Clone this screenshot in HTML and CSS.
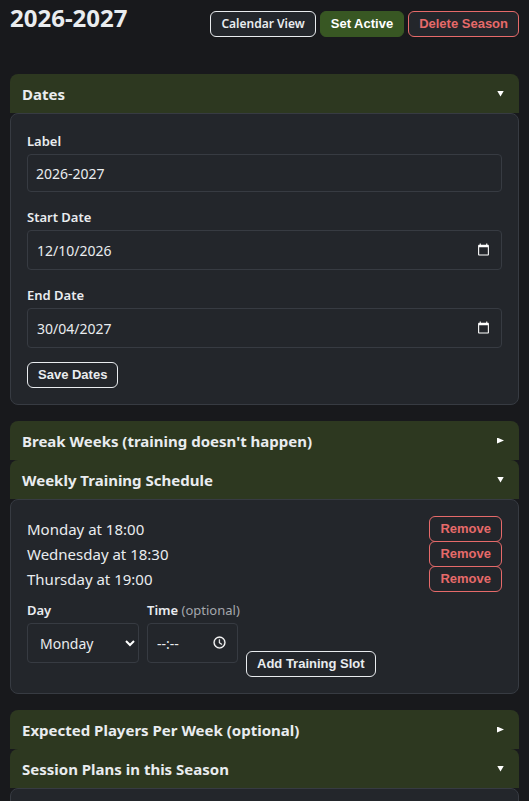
FILE: index.html
```html
<!DOCTYPE html>
<html lang="en">
<head>
    <meta charset="UTF-8">
    <meta name="viewport" content="width=device-width, initial-scale=1.0">
    <title>2026-2027</title>
    <link rel="stylesheet" href="styles.css">
</head>
<body>
    <header class="page-header">
        <h1>2026-2027</h1>
        <div class="actions">
            <a href="#calendar" class="btn btn-link">Calendar View</a>
            <button type="button" class="btn btn-primary">Set Active</button>
            <button type="button" class="btn btn-danger">Delete Season</button>
        </div>
    </header>

    <details class="section" open>
        <summary>Dates</summary>
        <form class="panel">
            <div class="field">
                <label for="label">Label</label>
                <input type="text" id="label" value="2026-2027">
            </div>
            <div class="field">
                <label for="start">Start Date</label>
                <div class="picker">
                    <input type="text" id="start" value="12/10/2026">
                    <svg class="icon" viewBox="0 0 24 24"><path d="M20 3h-1V1h-2v2H7V1H5v2H4c-1.1 0-2 .9-2 2v16c0 1.1.9 2 2 2h16c1.1 0 2-.9 2-2V5c0-1.1-.9-2-2-2zm0 18H4V8h16v13z"/></svg>
                </div>
            </div>
            <div class="field">
                <label for="end">End Date</label>
                <div class="picker">
                    <input type="text" id="end" value="30/04/2027">
                    <svg class="icon" viewBox="0 0 24 24"><path d="M20 3h-1V1h-2v2H7V1H5v2H4c-1.1 0-2 .9-2 2v16c0 1.1.9 2 2 2h16c1.1 0 2-.9 2-2V5c0-1.1-.9-2-2-2zm0 18H4V8h16v13z"/></svg>
                </div>
            </div>
            <button type="button" class="btn">Save Dates</button>
        </form>
    </details>

    <details class="section">
        <summary>Break Weeks (training doesn't happen)</summary>
    </details>

    <details class="section" open>
        <summary>Weekly Training Schedule</summary>
        <div class="panel">
            <ul class="slots">
                <li>Monday at 18:00 <button type="button" class="btn btn-danger">Remove</button></li>
                <li>Wednesday at 18:30 <button type="button" class="btn btn-danger">Remove</button></li>
                <li>Thursday at 19:00 <button type="button" class="btn btn-danger">Remove</button></li>
            </ul>
            <form class="slot-form">
                <div class="field field-day">
                    <label for="day">Day</label>
                    <div class="picker">
                        <select id="day">
                            <option>Monday</option>
                            <option>Tuesday</option>
                            <option>Wednesday</option>
                            <option>Thursday</option>
                            <option>Friday</option>
                            <option>Saturday</option>
                            <option>Sunday</option>
                        </select>
                        <svg class="chevron" viewBox="0 0 10 10"><path d="M1 3l4 4 4-4"/></svg>
                    </div>
                </div>
                <div class="field field-time">
                    <label for="time">Time <span class="hint">(optional)</span></label>
                    <div class="picker">
                        <input type="text" id="time" placeholder="--:--">
                        <svg class="icon" viewBox="0 0 24 24"><path stroke="#fff" stroke-width=".6" d="M12 1a11 11 0 1 0 0 22 11 11 0 0 0 0-22zm0 20a9 9 0 1 1 0-18 9 9 0 0 1 0 18zM12.5 6.5H11V13l5 3.2.8-1.3-4.3-2.7z"/></svg>
                    </div>
                </div>
                <button type="button" class="btn">Add Training Slot</button>
            </form>
        </div>
    </details>

    <details class="section">
        <summary>Expected Players Per Week (optional)</summary>
    </details>

    <details class="section" open>
        <summary>Session Plans in this Season</summary>
        <div class="panel"></div>
    </details>
</body>
</html>
```
FILE: styles.css
```css
* {
    box-sizing: border-box;
}
body {
    margin: 0;
    padding: 0 10px;
    background-color: #18191c;
    color: #e9ecef;
    font-family: "Segoe UI", "Noto Sans", sans-serif;
    font-size: 15px;
}
.page-header {
    display: flex;
    justify-content: space-between;
    align-items: flex-start;
    margin-bottom: 37px;
}
h1 {
    margin: 0;
    font-size: 24px;
    line-height: 36px;
}
.actions {
    display: flex;
    gap: 4px;
    padding-top: 11px;
}

/* buttons */
.btn {
    height: 26px;
    padding: 0 10px;
    border: 1px solid #e9ecef;
    border-radius: 6px;
    background-color: #23262b;
    color: #e9ecef;
    font-family: "Liberation Sans", Arial, sans-serif;
    font-size: 13px;
    font-weight: bold;
    line-height: 24px;
    white-space: nowrap;
    cursor: pointer;
}
.btn-link {
    font-family: "Segoe UI", "Noto Sans", sans-serif;
    font-size: 12px;
    font-weight: 600;
    text-decoration: none;
}
.btn-primary {
    border-color: #385723;
    background-color: #385723;
    color: #fff;
}
.btn-danger {
    border-color: #e66a6a;
    color: #e66a6a;
}

/* collapsible sections */
summary {
    display: flex;
    justify-content: space-between;
    align-items: center;
    height: 39px;
    padding: 0 15px 0 12px;
    border-radius: 8px 8px 0 0;
    background-color: #2d3820;
    font-weight: bold;
    cursor: pointer;
}
summary::after {
    content: "";
    width: 7px;
    height: 6px;
    background-color: #fff;
    clip-path: polygon(0 0, 100% 50%, 0 100%);
}
.section[open] summary::after {
    clip-path: polygon(0 0, 100% 0, 50% 100%);
}
.panel {
    margin-bottom: 16px;
    padding: 16px;
    border: 1px solid #373b42;
    border-radius: 8px;
    background-color: #23262b;
}

/* form fields */
.field {
    margin-bottom: 14px;
}
label {
    display: block;
    margin-bottom: 2px;
    font-size: 13px;
    font-weight: 600;
    line-height: 22px;
    white-space: nowrap;
}
.hint {
    color: #a5a8ad;
    font-weight: normal;
}
input, select {
    display: block;
    width: 100%;
    height: 38px;
    padding: 0 8px;
    border: 1px solid #373b42;
    border-radius: 4px;
    background-color: #23262b;
    color: #e9ecef;
    font-family: inherit;
    font-size: 14px;
}
input::placeholder {
    color: #e9ecef;
}
.picker {
    position: relative;
}
.picker input, .picker select {
    height: 40px;
    padding-left: 9px;
}
.picker select {
    padding-left: 12px;
    appearance: none;
}
.icon, .chevron {
    position: absolute;
    top: 13px;
    right: 12px;
    width: 13px;
    height: 13px;
    fill: #fff;
    pointer-events: none;
}
.chevron {
    top: 15px;
    right: 4px;
    width: 10px;
    height: 10px;
    fill: none;
    stroke: #fff;
    stroke-width: 2;
}

/* training slots */
.slots {
    margin: 0 0 8px;
    padding: 0;
    list-style: none;
}
.slots li {
    display: flex;
    justify-content: space-between;
    align-items: center;
    height: 25px;
}
.slot-form {
    display: flex;
    align-items: flex-end;
    gap: 8px;
}
.slot-form .btn {
    margin-bottom: 0;
}
.field-day {
    width: 112px;
}
.field-time {
    width: 91px;
}
```
